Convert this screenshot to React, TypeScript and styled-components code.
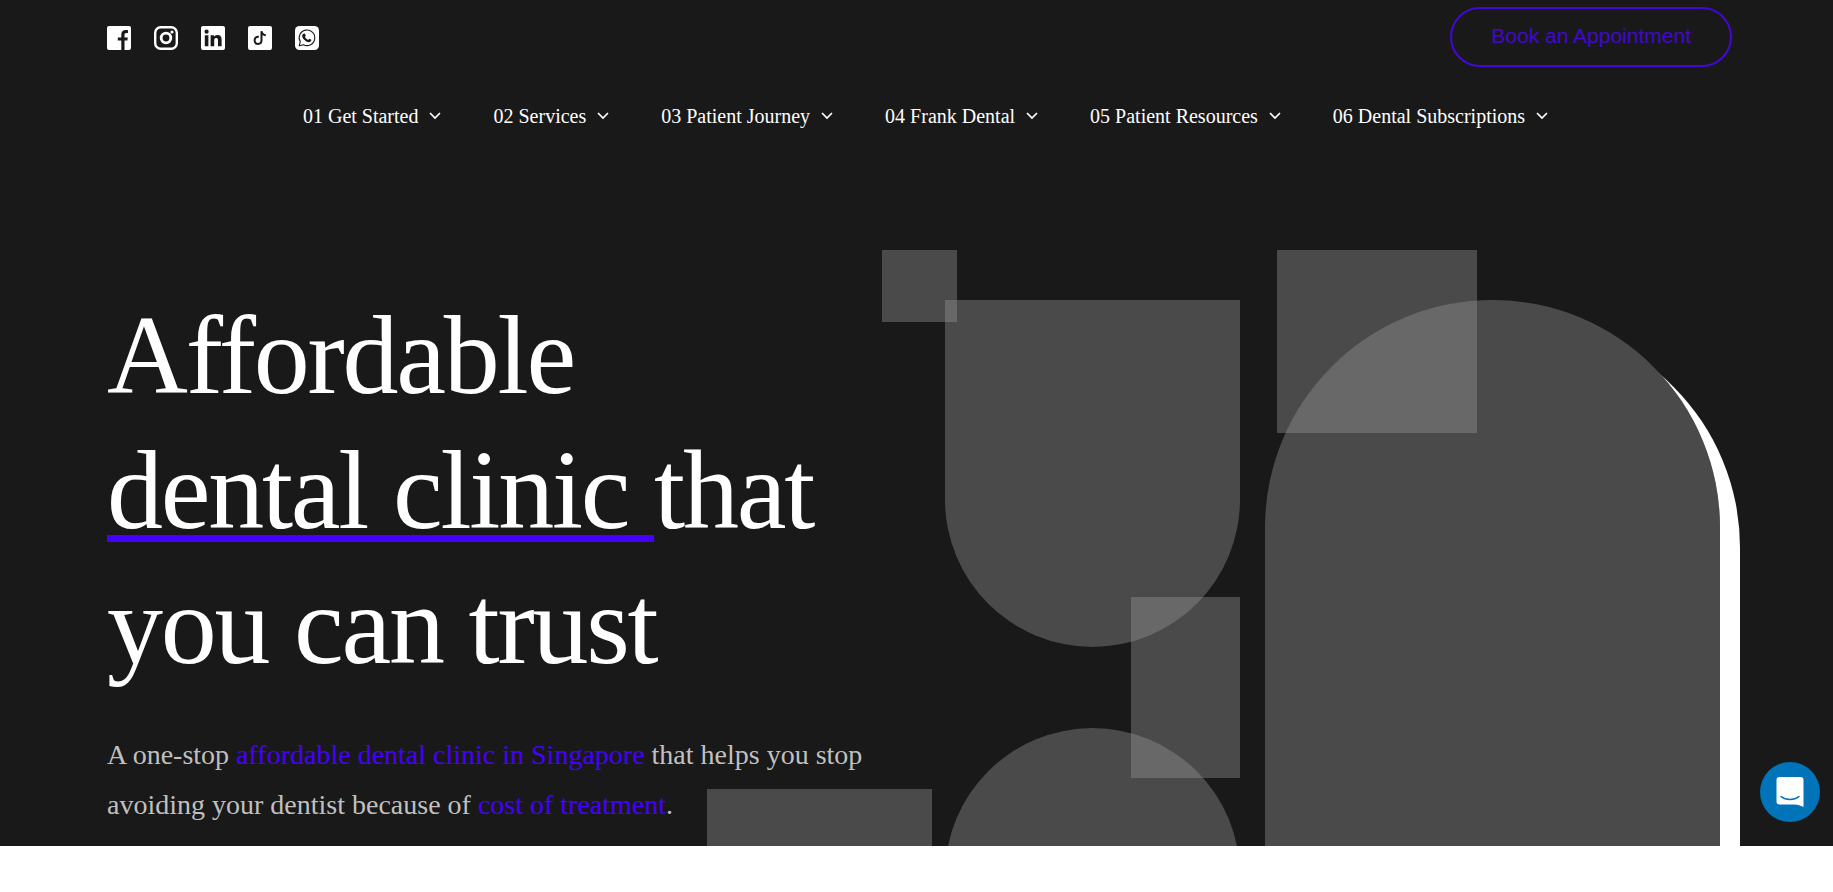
import React from "react";
import styled, { createGlobalStyle } from "styled-components";

const ink = "#191919";
const violet = "#4600ff";
const serif = `"Liberation Serif", "Times New Roman", serif`;
const sans = `"Liberation Sans", Arial, sans-serif`;

const GlobalStyle = createGlobalStyle`
  *, *::before, *::after { box-sizing: border-box; }
  body { margin: 0; background: #fff; font-family: ${serif}; }
`;

const Hero = styled.section`
  background: ${ink};
  color: #fff;
  overflow: hidden;
`;

const TopBar = styled.div`
  display: flex;
  justify-content: space-between;
  align-items: center;
  padding: 7px 101px 0 107px;
`;

const SocialList = styled.ul`
  display: flex;
  gap: 23px;
  margin: 0;
  padding: 2px 0 0;
  list-style: none;
`;

const SocialLink = styled.a`
  display: block;
  width: 24px;
  height: 24px;
  color: #fff;

  svg { display: block; width: 100%; height: 100%; }
`;

const BookButton = styled.button`
  height: 60px;
  padding: 0 39px 2px;
  border: 2px solid #4208d8;
  border-radius: 30px;
  background: transparent;
  color: #4208d0;
  font: 21px/24px ${sans};
  cursor: pointer;
`;

const Nav = styled.nav`
  padding: 37px 91px 0 109px;
`;

const NavList = styled.ul`
  display: flex;
  justify-content: center;
  flex-wrap: wrap;
  gap: 12px 52px;
  margin: 0;
  padding: 0;
  list-style: none;
`;

const NavButton = styled.button`
  display: flex;
  align-items: center;
  gap: 11px;
  padding: 0;
  border: 0;
  background: none;
  color: #fff;
  font: 20px/24px ${serif};
  cursor: pointer;

  svg { width: 12px; height: 8px; }
`;

const HeroGrid = styled.div`
  display: grid;
  grid-template-columns: minmax(0, 775fr) minmax(0, 858fr);
  align-items: start;
  padding: 122px 93px 0 107px;
`;

const Copy = styled.div`
  position: relative;
  z-index: 1;
  padding: 38px 0 16px;
`;

const Title = styled.h1`
  margin: 0;
  font-size: 112px;
  font-weight: 400;
  line-height: 135px;
  letter-spacing: -0.02em;
`;

const Underlined = styled.span`
  text-decoration: underline ${violet} 7px;
  text-underline-offset: 7px;
`;

const Lead = styled.p`
  margin: 37px 0 0;
  color: #c0c0c0;
  font-size: 28px;
  line-height: 50px;

  a { color: ${violet}; text-decoration: none; }
`;

const Art = styled.svg`
  display: block;
  width: 100%;
  height: auto;
  overflow: visible;
`;

const NextSection = styled.section`
  min-height: 46px;
  background: #fff;
`;

const ChatButton = styled.button`
  position: fixed;
  right: 13px;
  bottom: 70px;
  display: grid;
  place-items: center;
  width: 60px;
  height: 60px;
  padding: 0;
  border: 0;
  border-radius: 50%;
  background: #0073b9;
  cursor: pointer;

  svg { width: 28px; height: 30px; }
`;

const FacebookIcon = () => (
  <svg viewBox="0 0 24 24" aria-hidden="true">
    <path
      fill="currentColor"
      d="M2 0h20a2 2 0 0 1 2 2v20a2 2 0 0 1-2 2h-4.500v-9.400h2.900l.4-3H17.500V8.900c0-1.200.5-1.900 2-1.900h1.500V4.200c-.5-.1-1.400-.2-2.300-.2-2.700 0-4.400 1.600-4.400 4.500v3.100H10.800v3h3.500V24H2a2 2 0 0 1-2-2V2a2 2 0 0 1 2-2z"
    />
  </svg>
);

const InstagramIcon = () => (
  <svg viewBox="0 0 24 24" aria-hidden="true" fill="none" stroke="currentColor">
    <rect x="1.200" y="1.200" width="21.600" height="21.600" rx="5.500" strokeWidth="2.400" />
    <circle cx="12" cy="12" r="4.800" strokeWidth="2.800" />
    <circle cx="18" cy="6" r="1.600" fill="currentColor" stroke="none" />
  </svg>
);

const LinkedinIcon = () => (
  <svg viewBox="0 0 24 24" aria-hidden="true">
    <rect width="24" height="24" rx="2" fill="currentColor" />
    <g fill={ink}>
      <circle cx="5.600" cy="5.700" r="2.100" />
      <path d="M3.800 9.200h3.600v11H3.800zM9.600 9.200H13v1.500c.6-1 1.800-1.800 3.500-1.800 3.400 0 4.100 2.200 4.100 5.200v6.100H17v-5.400c0-1.400-.1-2.900-1.800-2.900s-2 1.300-2 2.800v5.500H9.600z" />
    </g>
  </svg>
);

const TiktokIcon = () => (
  <svg viewBox="0 0 24 24" aria-hidden="true">
    <rect width="24" height="24" rx="2" fill="currentColor" />
    <path
      fill="none"
      stroke={ink}
      strokeWidth="2"
      d="M10.800 10.700c-2.400-.3-4.200 1.300-4.200 3.600 0 2.100 1.500 3.600 3.400 3.600 2.100 0 3.500-1.500 3.500-3.600V5.200c.3 2.300 1.900 3.900 4.300 4"
    />
  </svg>
);

const WhatsappIcon = () => (
  <svg viewBox="0 0 24 24" aria-hidden="true">
    <rect width="24" height="24" rx="4.500" fill="currentColor" />
    <path
      fill="none"
      stroke={ink}
      strokeWidth="1.100"
      strokeLinejoin="round"
      d="M4.200 19.800l1.100-4A7.800 7.800 0 1 1 8.400 18.700z"
    />
    <path
      fill={ink}
      d="M9.400 7.600c.3 0 .5 0 .6.400l.7 1.600c.1.300 0 .5-.7 1.300.8 1.500 1.900 2.400 3.300 3 .5-.6.800-1.100 1-1.100.3 0 1.900.8 2 1 .2.500-.2 2.300-2.400 2.400-1.600 0-3.500-1-5-2.600-1.200-1.300-1.700-2.400-1.700-3.500 0-1.200.7-2.500 2.200-2.500z"
    />
  </svg>
);

const Chevron = () => (
  <svg viewBox="0 0 12 8" aria-hidden="true">
    <path d="M1 1l5 5 5-5" fill="none" stroke="currentColor" strokeWidth="1.700" />
  </svg>
);

const socials = [
  { name: "Facebook", Icon: FacebookIcon },
  { name: "Instagram", Icon: InstagramIcon },
  { name: "LinkedIn", Icon: LinkedinIcon },
  { name: "TikTok", Icon: TiktokIcon },
  { name: "WhatsApp", Icon: WhatsappIcon },
];

const menu = [
  "01 Get Started",
  "02 Services",
  "03 Patient Journey",
  "04 Frank Dental",
  "05 Patient Resources",
  "06 Dental Subscriptions",
];

const archPath = "M383 600V277.500a227.500 227.500 0 0 1 455 0V600z";

const HeroArt = () => (
  <Art viewBox="0 0 858 596" aria-hidden="true">
    <path d={archPath} transform="translate(20 20)" fill="#fff" />
    <path d={archPath} fill={ink} />
    <g fill="#9a9a9a" fillOpacity="0.38">
      <path d={archPath} />
      <rect x="395" y="0" width="200" height="183" />
      <rect x="0" y="0" width="75" height="72" />
      <path d="M63 50h295v199.500a147.500 147.500 0 0 1-295 0z" />
      <rect x="249" y="347" width="109" height="181" />
      <path d="M63 625.500a147.500 147.500 0 0 1 295 0V700H63z" />
      <rect x="-175" y="539" width="225" height="120" />
    </g>
  </Art>
);

export default function App() {
  return (
    <>
      <GlobalStyle />
      <Hero>
        <header>
          <TopBar>
            <SocialList>
              {socials.map(({ name, Icon }) => (
                <li key={name}>
                  <SocialLink href="#" aria-label={name}>
                    <Icon />
                  </SocialLink>
                </li>
              ))}
            </SocialList>
            <BookButton type="button">Book an Appointment</BookButton>
          </TopBar>
          <Nav aria-label="Main">
            <NavList>
              {menu.map((label) => (
                <li key={label}>
                  <NavButton type="button" aria-haspopup="true">
                    {label}
                    <Chevron />
                  </NavButton>
                </li>
              ))}
            </NavList>
          </Nav>
        </header>
        <HeroGrid>
          <Copy>
            <Title>
              Affordable
              <br />
              <Underlined>dental clinic </Underlined>that
              <br />
              you can trust
            </Title>
            <Lead>
              A one-stop <a href="#">affordable dental clinic in Singapore</a> that helps you stop
              <br />
              avoiding your dentist because of <a href="#">cost of treatment</a>.
            </Lead>
          </Copy>
          <HeroArt />
        </HeroGrid>
      </Hero>
      <NextSection />
      <ChatButton type="button" aria-label="Open chat">
        <svg viewBox="0 0 28 30" aria-hidden="true">
          <path
            fill="#fff"
            d="M3.500 0h21a3 3 0 0 1 3 3v27c-3-1.200-5.500-2.500-9-2.500h-15a3 3 0 0 1-3-3V3a3 3 0 0 1 3-3z"
          />
          <path
            d="M5 19.500c5 4 13 4 18 0"
            fill="none"
            stroke="#0073b9"
            strokeWidth="1.600"
            strokeLinecap="round"
          />
        </svg>
      </ChatButton>
    </>
  );
}
